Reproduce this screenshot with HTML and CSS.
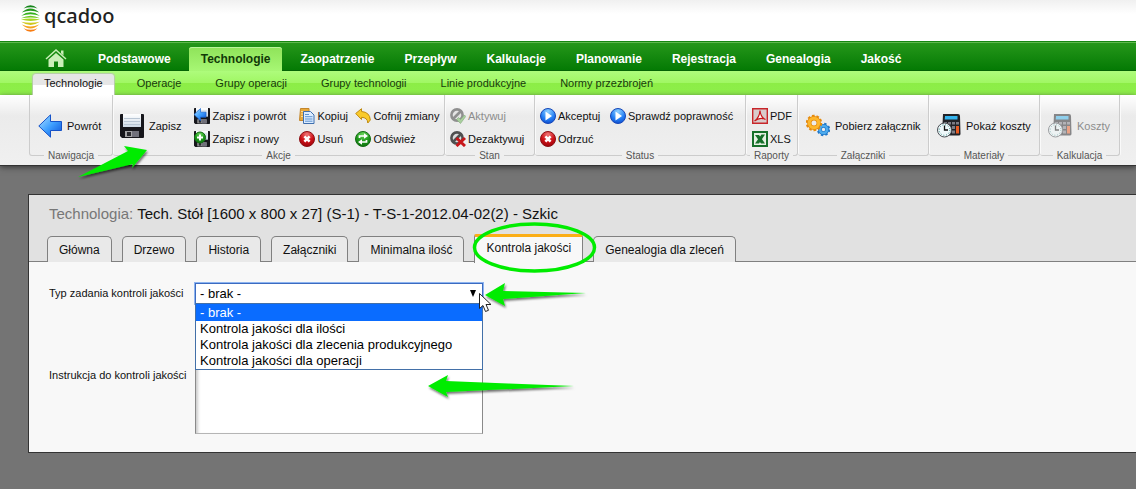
FILE: index.html
```html
<!DOCTYPE html>
<html lang="pl">
<head>
<meta charset="utf-8">
<title>qcadoo</title>
<link rel="stylesheet" href="styles.css">
</head>
<body>
<svg class="defs" width="0" height="0" aria-hidden="true">
  <defs>
    <linearGradient id="blue" x1="0" y1="0" x2="1" y2="1"><stop offset="0" stop-color="#b4e4ff"/><stop offset=".5" stop-color="#3fa0ff"/><stop offset="1" stop-color="#0b4fd8"/></linearGradient>
    <radialGradient id="ball-blue" cx=".5" cy=".2" r=".9"><stop offset="0" stop-color="#8fd0ff"/><stop offset=".55" stop-color="#2480f4"/><stop offset="1" stop-color="#0a3fc4"/></radialGradient>
    <radialGradient id="ball-red" cx=".5" cy=".2" r=".9"><stop offset="0" stop-color="#f07878"/><stop offset=".5" stop-color="#cf1218"/><stop offset="1" stop-color="#8e0008"/></radialGradient>
    <radialGradient id="ball-green" cx=".5" cy=".2" r=".9"><stop offset="0" stop-color="#6cd65c"/><stop offset=".5" stop-color="#1f9a1c"/><stop offset="1" stop-color="#0a6a0c"/></radialGradient>
    <linearGradient id="plate" x1="0" y1="0" x2="0" y2="1"><stop offset="0" stop-color="#fff"/><stop offset="1" stop-color="#cfdbe8"/></linearGradient>
    <symbol id="disk" viewBox="0 0 24 24">
      <path d="M0 1q0-1 1-1h22q1 0 1 1v22q0 1-1 1H2l-2-2z" fill="#17171c"/>
      <path d="M3 0h18v13H3z" fill="url(#plate)"/>
      <path d="M4 4.500h16M4 7.500h16M4 10.500h16" stroke="#b9c6d4"/>
      <path d="M5 17h14v6H5z" fill="#a4a4a6"/><path d="M12 17h7v6h-7z" fill="#70707a"/><path d="M7 18h4v4H7z" fill="#2b2b30"/>
    </symbol>
    <symbol id="stop" viewBox="0 0 16 16"><circle cx="8" cy="8" r="7.500" fill="url(#ball-red)" stroke="#8c1014"/><path d="m5.400 5.400 5.200 5.200m0-5.200-5.200 5.200" stroke="#fff" stroke-width="2.600"/></symbol>
    <symbol id="play" viewBox="0 0 16 16"><circle cx="8" cy="8" r="7.500" fill="url(#ball-blue)" stroke="#1747b8"/><path d="M5.500 3.600v8.800L12 8z" fill="#fff"/></symbol>
    <symbol id="calc" viewBox="0 0 24 24">
      <path d="M6 0h15q2 0 2 2l.5 18q0 1.500-2 1.500H5z" fill="#222226"/>
      <path d="M8 2h12.500v3.500H7.700z" fill="#35b4ee"/>
      <path d="M7 8h3v2.500H7zM11 8h3v2.500h-3zM15 8h3v2.500h-3zM15 12h3v3h-3zM15 16.500h3v3h-3z" fill="#7c7c84"/>
      <path d="M19 8h3v2.500h-3z" fill="#7c7c84"/><path d="M19 12h3v7.500h-3z" fill="#e85a22"/>
      <circle cx="7.500" cy="16" r="7" fill="#eef8fa" stroke="#4a4e54"/>
      <circle cx="7.500" cy="16" r="5.300" fill="none" stroke="#3b8f8a" stroke-dasharray="1 1.770"/>
      <path d="M7.500 11.500V16H11" fill="none" stroke="#111" stroke-width="1.300"/>
    </symbol>
    <filter id="drop" x="-20%" y="-40%" width="140%" height="200%"><feDropShadow dx="1" dy="2" stdDeviation="1.200" flood-color="#000" flood-opacity=".55"/></filter>
  </defs>
</svg>

<header class="brand">
  <svg class="brand-mark" viewBox="0 0 19 27" aria-hidden="true">
    <path d="M2.500 3.500Q9.500-3 16.500 3.500 9.500.8 2.500 3.500z" fill="#15851a"/>
    <path d="M.8 7.500Q9.500-.3 18.200 7.500 9.500 4 .8 7.500z" fill="#249a1c"/>
    <path d="M.2 10.700Q9.500 3.900 18.800 10.700 9.500 7.700.2 10.700z" fill="#35b01c"/>
    <path d="M0 13.300Q9.500 8.200 19 13.300 9.500 11.700 0 13.300z" fill="#6fca1d"/>
    <path d="M0 14.500Q9.500 12.400 19 14.500 9.500 17.300 0 14.500z" fill="#a8d622"/>
    <path d="M.2 16.800Q9.500 18.500 18.800 16.800 9.500 23.200.2 16.800z" fill="#cfc81c"/>
    <path d="M.8 19.500Q9.500 23.300 18.200 19.500 9.500 27.600.8 19.500z" fill="#f5a31d"/>
    <path d="M2.500 23.200Q9.500 26.500 16.500 23.200 9.500 30.500 2.500 23.200z" fill="#f87c12"/>
  </svg>
  <span class="brand-name">qcadoo</span>
</header>

<nav class="main-nav" aria-label="Menu główne">
  <a class="home" href="#" aria-label="Start">
    <svg viewBox="0 0 22 18" aria-hidden="true"><path d="M1 10 11 1l10 9" fill="none" stroke="#c9efb8" stroke-width="1.500"/><path d="M16 1.500h2.500v5L16 4.300z" fill="#c9efb8"/><path d="M3.500 10.500 11 4l7.500 6.500V18H13v-5.500H9V18H3.500z" fill="#c9efb8"/></svg>
  </a>
  <a href="#">Podstawowe</a>
  <a class="current" href="#">Technologie</a>
  <a href="#">Zaopatrzenie</a>
  <a href="#">Przepływ</a>
  <a href="#">Kalkulacje</a>
  <a href="#">Planowanie</a>
  <a href="#">Rejestracja</a>
  <a href="#">Genealogia</a>
  <a href="#">Jakość</a>
</nav>

<nav class="sub-nav" aria-label="Technologie">
  <a class="current" href="#">Technologie</a>
  <a href="#">Operacje</a>
  <a href="#">Grupy operacji</a>
  <a href="#">Grupy technologii</a>
  <a href="#">Linie produkcyjne</a>
  <a href="#">Normy przezbrojeń</a>
</nav>

<div class="ribbon" role="toolbar">
  <section class="group nawigacja">
    <div class="tools">
      <button class="big"><svg viewBox="0 0 24 24" aria-hidden="true"><path d="M.8 12 12.500.8v6.700h11v9h-11v6.700z" fill="url(#blue)" stroke="#1552c8"/></svg>Powrót</button>
    </div>
    <h2>Nawigacja</h2>
  </section>
  <section class="group akcje">
    <div class="tools">
      <button class="big"><svg aria-hidden="true"><use href="#disk"/></svg>Zapisz</button>
      <div class="pairs">
        <button><svg viewBox="0 0 16 16" aria-hidden="true"><use href="#disk" width="16" height="16"/><path d="M0 6.500 6.500.5v3.700H12v5H6.500v3.600z" fill="url(#blue)" stroke="#1b64d0" stroke-width=".7"/></svg>Zapisz i powrót</button>
        <button><svg viewBox="0 0 16 16" aria-hidden="true"><path d="M1.500.5h8.500v12h-9.500z" fill="#e9a93a" stroke="#c4862a"/><path d="M2 3.500h5M2 6h3M2 8.500h3" stroke="#fbdc98"/><path d="M4.500 3.500h7l3.500 3.500v8.500H4.500z" fill="#dcecff" stroke="#3f6fae"/><path d="M6 6.500h4m-4 2.200h7.500M6 11h7.500M6 13.200h7.500" stroke="#5d93d0"/></svg>Kopiuj</button>
        <button><svg viewBox="0 0 16 16" aria-hidden="true"><path d="M.7 5.500 6.500.7v2.800q8.300.6 8.800 8.500l-2.500 3q-.2-5.500-6.300-5.700v2.200z" fill="#f9ca2b" stroke="#c08a10"/></svg>Cofnij zmiany</button>
        <button><svg viewBox="0 0 16 16" aria-hidden="true"><use href="#disk" width="16" height="16"/><circle cx="6" cy="6.500" r="5.500" fill="url(#ball-green)" stroke="#126a12"/><path d="M6 3.500v6m-3-3h6" stroke="#fff" stroke-width="2"/></svg>Zapisz i nowy</button>
        <button><svg aria-hidden="true"><use href="#stop"/></svg>Usuń</button>
        <button><svg viewBox="0 0 16 16" aria-hidden="true"><circle cx="8" cy="8" r="7.500" fill="url(#ball-green)" stroke="#126a12"/><path d="M4.500 7V5H10M11.500 9v2H6" fill="none" stroke="#fff" stroke-width="1.700"/><path d="m9 2.200 4 2.800-4 2.700zM7 8.300 3 11l4 2.800z" fill="#fff"/></svg>Odśwież</button>
      </div>
    </div>
    <h2>Akcje</h2>
  </section>
  <section class="group stan">
    <div class="tools"><div class="pairs">
      <button disabled><svg viewBox="0 0 16 16" aria-hidden="true"><circle cx="7" cy="7" r="5.600" fill="#e4e4e4" stroke="#8f8f8f" stroke-width="2.600"/><path d="m3 11 8-8" stroke="#8f8f8f" stroke-width="2.600"/><path d="m6.500 11.500 2-2 2 2 4-4.500 1.200 1.500-5.200 7z" fill="#a9cf9e" stroke="#82a97a" stroke-width=".6"/></svg>Aktywuj</button>
      <button><svg viewBox="0 0 16 16" aria-hidden="true"><circle cx="7" cy="7" r="5.600" fill="#ddd" stroke="#505050" stroke-width="2.600"/><path d="m3 11 8-8" stroke="#505050" stroke-width="2.600"/><path d="m6.500 7 8.500 8m0-8-8.500 8" stroke="#c8161a" stroke-width="3"/></svg>Dezaktywuj</button>
    </div></div>
    <h2>Stan</h2>
  </section>
  <section class="group status">
    <div class="tools"><div class="pairs">
      <button><svg aria-hidden="true"><use href="#play"/></svg>Akceptuj</button>
      <button><svg aria-hidden="true"><use href="#play"/></svg>Sprawdź poprawność</button>
      <button><svg aria-hidden="true"><use href="#stop"/></svg>Odrzuć</button>
    </div></div>
    <h2>Status</h2>
  </section>
  <section class="group raporty">
    <div class="tools"><div class="pairs">
      <button><svg viewBox="0 0 16 16" aria-hidden="true"><path d="M.7.7h14.600v14.600H.7z" fill="#d9cccc" stroke="#c8262a" stroke-width="1.400"/><path d="M2.500 13q5-3.500 5.500-10.500Q8.500 9 13.500 11.500 8 8.500 2.500 13z" fill="#fff" stroke="#c8161a" stroke-width="1.200"/></svg>PDF</button>
      <button><svg viewBox="0 0 16 16" aria-hidden="true"><path d="M1 1h14v14H1z" fill="#e6f1e4" stroke="#16702a" stroke-width="2"/><path d="M3 4h4l6 8.500H9z" fill="#16702a"/><path d="M13 3.500H9.500L3 12.500h4z" fill="#16702a"/></svg>XLS</button>
    </div></div>
    <h2>Raporty</h2>
  </section>
  <section class="group zalaczniki">
    <div class="tools">
      <button class="big"><svg viewBox="0 0 24 24" aria-hidden="true"><circle cx="17.500" cy="15.500" r="5.500" fill="none" stroke="#2178c8" stroke-width="2.400" stroke-dasharray="2.300 2.020"/><circle cx="17.500" cy="15.500" r="3.600" fill="none" stroke="#2178c8" stroke-width="3.800"/><circle cx="17.500" cy="15.500" r="3.600" fill="none" stroke="#4cabee" stroke-width="2.400"/><circle cx="8" cy="9" r="7" fill="none" stroke="#e58a0c" stroke-width="2.400" stroke-dasharray="2.600 1.800"/><circle cx="8" cy="9" r="4.700" fill="none" stroke="#e58a0c" stroke-width="4.400"/><circle cx="8" cy="9" r="4.700" fill="none" stroke="#fdb72c" stroke-width="3"/></svg>Pobierz załącznik</button>
    </div>
    <h2>Załączniki</h2>
  </section>
  <section class="group materialy">
    <div class="tools"><button class="big"><svg aria-hidden="true"><use href="#calc"/></svg>Pokaż koszty</button></div>
    <h2>Materiały</h2>
  </section>
  <section class="group kalkulacja">
    <div class="tools"><button class="big" disabled><svg class="dim" aria-hidden="true"><use href="#calc"/></svg>Koszty</button></div>
    <h2>Kalkulacja</h2>
  </section>
</div>

<main class="panel">
  <div class="panel-head">
    <h1><span>Technologia:</span> Tech. Stół [1600 x 800 x 27] (S-1) - T-S-1-2012.04-02(2) - Szkic</h1>
    <div class="tabs" role="tablist">
      <button role="tab">Główna</button>
      <button role="tab">Drzewo</button>
      <button role="tab">Historia</button>
      <button role="tab">Załączniki</button>
      <button role="tab">Minimalna ilość</button>
      <button role="tab" aria-selected="true" class="selected">Kontrola jakości</button>
      <button role="tab">Genealogia dla zleceń</button>
    </div>
  </div>
  <form class="fields">
    <label for="typ">Typ zadania kontroli jakości</label>
    <div class="dropdown">
      <select id="typ"><option>- brak -</option></select>
      <ul class="options" role="listbox">
        <li role="option" aria-selected="true">- brak -</li>
        <li role="option">Kontrola jakości dla ilości</li>
        <li role="option">Kontrola jakości dla zlecenia produkcyjnego</li>
        <li role="option">Kontrola jakości dla operacji</li>
      </ul>
    </div>
    <label for="instrukcja">Instrukcja do kontroli jakości</label>
    <textarea id="instrukcja"></textarea>
  </form>
</main>

<svg class="marks" width="1136" height="489" viewBox="0 0 1136 489" aria-hidden="true">
  <g fill="#00ec00" filter="url(#drop)">
    <path d="m147 150-23-4 4 5-50 26 55-13-1 4z"/>
    <path d="m485 295 20-12-2 8 83 2-83 6 2 7z"/>
    <path d="m428 386 20-11-2 6 128 5-128 6 2 5z"/>
  </g>
  <ellipse cx="534.500" cy="247.500" rx="60" ry="23.500" fill="none" stroke="#00ec00" stroke-width="3.500"/>
  <path d="M479.500 293.500v15l3.500-3 2.500 6 3-1.200-2.500-5.800h5z" fill="#fff" stroke="#222"/>
</svg>
</body>
</html>
```
FILE: styles.css
```css
* { box-sizing: border-box; }

body {
  margin: 0;
  min-height: 100vh;
  background: #747474;
  color: #111;
  font: 11px/16px "Liberation Sans", Arial, sans-serif;
}

h1, h2, ul { margin: 0; padding: 0; font-weight: normal; list-style: none; }
a { color: inherit; text-decoration: none; }
button { font: inherit; color: inherit; background: none; border: 0; padding: 0; }
.defs { position: absolute; }

.brand {
  display: flex;
  align-items: flex-start;
  gap: 4px;
  height: 41px;
  padding: 5px 21px 0;
  background: linear-gradient(#f0f0f0, #fff 14px);
}
.brand-mark { width: 19px; height: 27px; }
.brand-name { font: 500 20px/22px "Noto Sans", sans-serif; color: #222; }

.main-nav {
  display: flex;
  align-items: flex-end;
  gap: 6px;
  height: 30px;
  padding-left: 33px;
  background: linear-gradient(#27981b, #047a04);
  border-top: 1px solid #158610;
  border-bottom: 1px solid #056405;
  box-shadow: inset 0 1px #5fb84e;
  color: #fff;
  font-size: 12px;
  font-weight: bold;
}
.main-nav a { padding: 5px 12px 0; height: 24px; }
.main-nav .home { width: 47px; padding: 3px 12px 0; }
.home svg { display: block; width: 22px; height: 18px; }
.main-nav .current {
  padding-top: 4px;
  margin-bottom: -1px;
  background: linear-gradient(#8fe35a, #a7f774);
  border-radius: 3px 3px 0 0;
  box-shadow: inset 0 1px #b9f59a;
  color: #113a08;
}

.sub-nav {
  display: flex;
  align-items: flex-end;
  gap: 12px;
  height: 24px;
  padding-left: 33px;
  background: linear-gradient(#aefc7c, #a0f763 50%, #8ced46 51%, #8ff04c);
  color: #173a0c;
}
.sub-nav a { padding: 1px 11px 0; height: 21px; }
.sub-nav .current {
  background: linear-gradient(#e6e6e6 50%, #fff 51%);
  border-radius: 3px 3px 0 0;
  box-shadow: 0 0 1px 1px #b9c9ae;
  clip-path: inset(-2px -2px 0);
  color: #111;
}

.ribbon {
  display: flex;
  height: 70px;
  padding-left: 29px;
  background: linear-gradient(#fff, #ebebeb 30%, #f0f0f0);
  box-shadow: 0 1px #333, 0 2px 6px #333;
}
.group {
  display: flex;
  flex-direction: column;
  flex: none;
  height: 61px;
  border: solid #ccc;
  border-width: 0 1px 1px 0;
  border-radius: 0 0 3px 3px;
  box-shadow: 1px 0 #fafafa;
}
.group:first-child { border-left-width: 1px; }
.group h2 {
  align-self: center;
  padding: 0 4px;
  margin-bottom: -7px;
  background: #efefef;
  color: #555;
  font-size: 10px;
  line-height: 12px;
}
.tools { display: flex; flex: 1; min-height: 0; padding: 9px 0 0 6px; }
.group button { display: flex; align-items: center; gap: 2px; height: 23px; white-space: nowrap; }
.group button svg { flex: none; width: 16px; height: 16px; }
.group .big { gap: 5px; height: 44px; }
.group .big svg { width: 24px; height: 24px; }
.group button:disabled { color: #8c8c8c; }
.group .dim { opacity: .5; }
.pairs { display: grid; align-content: start; grid-template-rows: 23px 23px; }

.nawigacja { width: 84px; }
.nawigacja .tools { padding-left: 8px; }
.akcje { width: 332px; }
.akcje .tools { gap: 13px; padding-left: 7px; }
.akcje .pairs { grid-template-columns: 105px 56px 90px; }
.stan { width: 90px; }
.status { width: 211px; }
.status .tools, .stan .tools { padding-left: 5px; }
.status .pairs { grid-template-columns: 70px 130px; }
.raporty { width: 52px; }
.zalaczniki { width: 131px; }
.zalaczniki .tools, .materialy .tools, .kalkulacja .tools { padding-left: 8px; }
.materialy { width: 111px; }
.kalkulacja { width: 80px; }

.panel {
  margin: 29px 0 36px 28px;
  background: #f8f8f8;
  border: solid #333;
  border-width: 1px 0 1px 1px;
}
.panel-head {
  height: 67px;
  padding: 10px 18px 0;
  background: #e1e1e1;
  border-bottom: 1px solid #808080;
}
h1 { padding-left: 2px; font-size: 15px; line-height: 18px; }
h1 span { color: #777; }
.tabs { display: flex; align-items: flex-end; gap: 10px; height: 39px; }
.tabs button {
  height: 26px;
  padding: 1px 11px 0;
  background: #e9e9e9;
  border: 1px solid #808080;
  border-bottom: 0;
  border-radius: 5px 5px 0 0;
  font-size: 12px;
  white-space: nowrap;
}
.tabs .selected {
  height: 29px;
  margin-bottom: -1px;
  padding-bottom: 5px;
  background: #f8f8f8;
  border-top: 3px solid #fbae17;
  border-radius: 2px 2px 0 0;
}

.fields {
  display: grid;
  grid-template-columns: 146px 288px;
  align-items: center;
  row-gap: 13px;
  padding: 21px 20px 18px;
}
.fields label { padding-bottom: 2px; }
.dropdown { position: relative; }
select, textarea { display: block; width: 100%; background: #fff; }
select {
  height: 21px;
  padding: 0 4px;
  appearance: none;
  border: 1px solid #3c6bc0;
  box-shadow: 0 0 0 1px #8db4f0;
  color: #000;
  font: 13px/18px "Liberation Sans", Arial, sans-serif;
}
.dropdown::after {
  content: "";
  position: absolute;
  top: 7px;
  right: 7px;
  border: solid transparent;
  border-width: 7px 3px 0;
  border-top-color: #000;
}
.options {
  position: absolute;
  z-index: 1;
  top: 20px;
  left: 0;
  right: 0;
  background: #fff;
  border: 1px solid #4370a8;
  color: #000;
  font-size: 13px;
}
.options li { padding: 0 4px; }
.options [aria-selected] { padding-top: 1px; background: #0a6cff; color: #fff; }
textarea {
  height: 117px;
  resize: none;
  border: 1px solid #8a8a8a;
  border-bottom-color: #b5b5b5;
  box-shadow: inset 4px 0 3px -2px #ccc;
}

.marks { position: absolute; top: 0; left: 0; pointer-events: none; z-index: 2; }
```
